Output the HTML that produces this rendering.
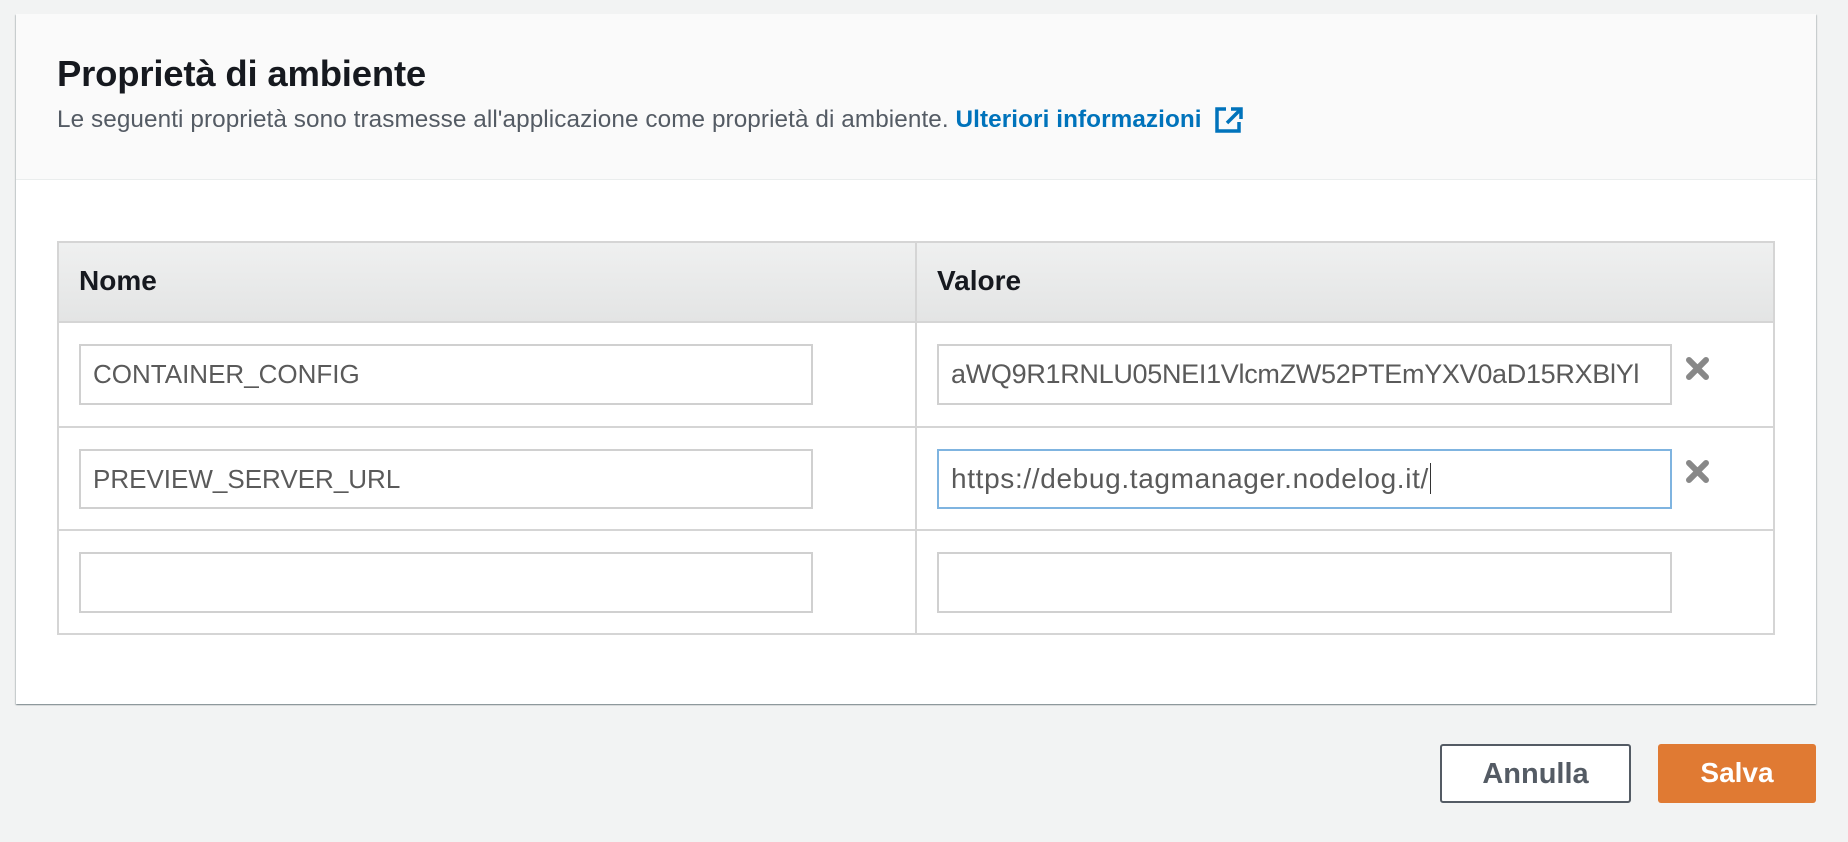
<!DOCTYPE html>
<html><head><meta charset="utf-8"><style>
*{box-sizing:border-box;margin:0;padding:0}
body{width:1848px;height:842px;background:#f2f3f3;font-family:"Liberation Sans",sans-serif;position:relative;overflow:hidden}
.card{position:absolute;left:16px;top:14px;width:1800px;height:690px;background:#fff;box-shadow:0 1px 1px 0 rgba(0,28,36,.3),1px 1px 1px 0 rgba(0,28,36,.15),-1px 1px 1px 0 rgba(0,28,36,.15)}
.hdr{position:absolute;left:0;top:0;width:1800px;height:166px;background:#fafafa;border-bottom:1px solid #eaeded}
.title{position:absolute;left:41px;top:39px;font-size:36.5px;font-weight:bold;color:#16191f;letter-spacing:-0.2px}
.sub{position:absolute;left:41px;top:92px;font-size:24.3px;color:#545b64;white-space:nowrap;letter-spacing:0.08px}
.sub a{color:#0073bb;font-weight:bold;text-decoration:none}
.abs{position:absolute}
.inp{position:absolute;border:2px solid #d0d0d0;background:#fff;font-size:26px;color:#5a5a5a;padding-left:12px;line-height:56px;overflow:hidden;white-space:nowrap}
.btn{position:absolute;top:744px;height:59px;border-radius:3px;font-weight:bold;text-align:center;line-height:57px}
</style></head><body>
<div class="card">
 <div class="hdr">
  <div class="title">Proprietà di ambiente</div>
  <div class="sub">Le seguenti proprietà sono trasmesse all'applicazione come proprietà di ambiente. <a>Ulteriori informazioni</a></div>
  <svg class="abs" style="left:1199px;top:93px" width="28" height="26" viewBox="0 0 28 26"><path d="M11 2H2v22h22v-9" fill="none" stroke="#0073bb" stroke-width="3.5"/><path d="M16 2h10v10M26 2L12 16" fill="none" stroke="#0073bb" stroke-width="3.5"/></svg>
 </div>
</div>
<div class="abs" style="left:57px;top:241px;width:1718px;height:394px;border:2px solid #d5d5d5"></div>
<div class="abs" style="left:59px;top:243px;width:1714px;height:79px;background:linear-gradient(#eff0f0,#e3e4e4)"></div>
<div class="abs" style="left:57px;top:321px;width:1718px;height:2px;background:#d5d5d5"></div>
<div class="abs" style="left:57px;top:426px;width:1718px;height:2px;background:#d5d5d5"></div>
<div class="abs" style="left:57px;top:529px;width:1718px;height:2px;background:#d5d5d5"></div>
<div class="abs" style="left:915px;top:241px;width:2px;height:394px;background:#d5d5d5"></div>
<div class="abs" style="left:79px;top:265px;font-size:28px;font-weight:bold;color:#16191f">Nome</div>
<div class="abs" style="left:937px;top:265px;font-size:28px;font-weight:bold;color:#16191f">Valore</div>

<div class="inp" style="left:79px;top:344px;width:734px;height:61px">CONTAINER_CONFIG</div>
<div class="inp" style="left:937px;top:344px;width:735px;height:61px;padding-right:8px;font-size:27px;letter-spacing:-0.3px">aWQ9R1RNLU05NEI1VlcmZW52PTEmYXV0aD15RXBlYl</div>
<div class="inp" style="left:79px;top:449px;width:734px;height:60px">PREVIEW_SERVER_URL</div>
<div class="inp" style="left:937px;top:449px;width:735px;height:60px;border-color:#7fb4e0;font-size:28px;letter-spacing:0.65px">https://debug.tagmanager.nodelog.it/<span style="border-left:1.5px solid #333;margin-left:1px"></span></div>
<div class="inp" style="left:79px;top:552px;width:734px;height:61px"></div>
<div class="inp" style="left:937px;top:552px;width:735px;height:61px"></div>

<svg class="abs" style="left:1685px;top:357px" width="25" height="23" viewBox="0 0 25 23"><path d="M4 3l17 17M21 3L4 20" stroke="#888" stroke-width="6" stroke-linecap="round"/></svg>
<svg class="abs" style="left:1685px;top:460px" width="25" height="23" viewBox="0 0 25 23"><path d="M4 3l17 17M21 3L4 20" stroke="#888" stroke-width="6" stroke-linecap="round"/></svg>

<div class="btn" style="left:1440px;width:191px;border:2px solid #545b64;background:#fff;color:#545b64;font-size:29px">Annulla</div>
<div class="btn" style="left:1658px;width:158px;background:#e07a33;color:#fff;font-size:28px">Salva</div>
</body></html>
